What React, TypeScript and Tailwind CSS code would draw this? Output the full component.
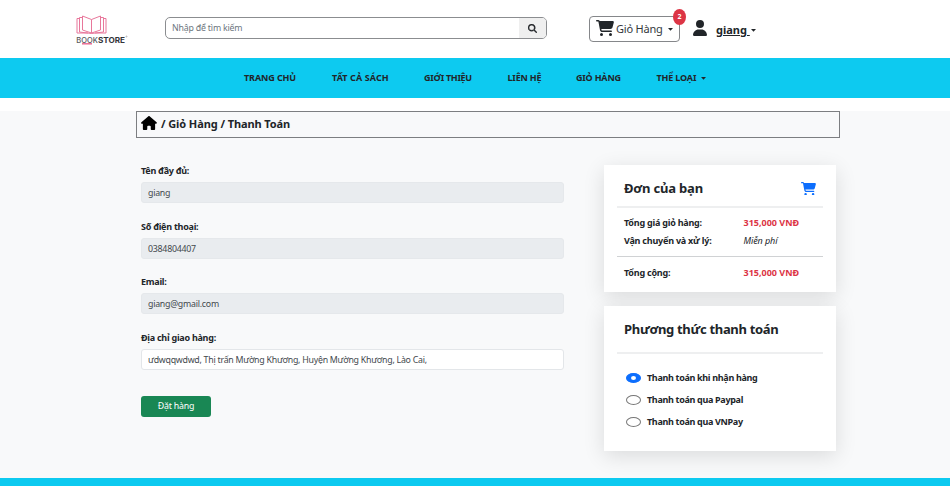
import type { ReactNode } from "react";
import { FaCartShopping, FaHouse, FaMagnifyingGlass, FaUser } from "react-icons/fa6";

const Caret = ({ className = "" }: { className?: string }) => (
  <svg viewBox="0 0 5 3" className={`h-[3px] w-[5px] shrink-0 ${className}`} fill="#212529">
    <path d="M0 0H5L2.500 2.700Z" />
  </svg>
);

const Logo = () => (
  <svg viewBox="0 0 52 32" className="h-8 w-[52px] shrink-0" fill="none" stroke="#e8779b" strokeWidth="1">
    <path d="M15.500 4.500 L6.500 1 V15 L15.500 18 L24.500 15 V1 Z V18" />
    <path d="M6 2.500 H3.500 V17 L15.500 18.500 L27.500 17 V2.500 H25 M3.500 3.500 H1 V18 H12 M27.500 3.500 H30 V18 H19" />
    <text x="0.300" y="27.600" stroke="none" fill="#55565b" fontSize="7.300" fontWeight="500" fontFamily="Inter, sans-serif" textLength="21.500" lengthAdjust="spacingAndGlyphs">BOOK</text>
    <text x="22" y="27.600" stroke="none" fill="#333439" fontSize="7.300" fontWeight="700" fontFamily="Inter, sans-serif" textLength="27" lengthAdjust="spacingAndGlyphs">STORE</text>
    <path d="M6 28.800 H16" strokeWidth="1.400" stroke="#e8638d" />
    <circle cx="50.500" cy="21.500" r=".6" strokeWidth=".4" stroke="#777" />
  </svg>
);

const Field = ({ label, value, editable = false }: { label: string; value: string; editable?: boolean }) => (
  <div className="h-[55.500px]">
    <div className="h-[18px] text-[9px] leading-[14px] font-bold tracking-[-0.26px]">{label}</div>
    <div className={`flex h-[21px] items-center rounded-[3px] border px-[6px] pt-[2px] text-[8.800px] tracking-[-0.250px] text-[#43484d] ${editable ? "border-[#e3e6e9] bg-white" : "border-[#e5e8eb] bg-[#e9ecef]"}`}>
      {value}
    </div>
  </div>
);

const Row = ({ label, children }: { label: string; children: ReactNode }) => (
  <div className="flex h-[18px] items-center pl-[7px]">
    <span className="w-[119.500px] text-[9px] font-bold tracking-[-0.220px]">{label}</span>
    {children}
  </div>
);

const Radio = ({ label, checked = false }: { label: string; checked?: boolean }) => (
  <label className="flex h-[22.300px] items-center pl-[9px]">
    <span className={`flex h-[10px] w-[15px] items-center justify-center rounded-[50%] border ${checked ? "border-[#0d6efd] bg-[#0d6efd]" : "border-[#777] bg-white"}`}>
      {checked && <span className="h-[4px] w-[5px] rounded-[50%] bg-white" />}
    </span>
    <span className="ml-[6px] text-[9px] font-bold tracking-[-0.320px]">{label}</span>
  </label>
);

export default function App() {
  return (
    <div className="flex h-[486px] w-[950px] flex-col overflow-hidden bg-white font-['Noto_Sans','Open_Sans',sans-serif] text-[#212529]">
      <header className="flex h-[58px] shrink-0 pl-[76px]">
        <div className="pt-[15px]"><Logo /></div>
        <div className="mt-[17px] ml-[37px] flex h-[22px] w-[382px] overflow-hidden rounded-[5px] border border-[#8b8d90] bg-white">
          <span className="flex flex-1 items-center pt-[2px] pl-[6px] text-[8.800px] tracking-[-0.200px] text-[#6c757d]">Nhập để tìm kiếm</span>
          <span className="flex w-[27px] items-center justify-center bg-[#efefef]"><FaMagnifyingGlass size={9} stroke="currentColor" strokeWidth={20} /></span>
        </div>
        <div className="relative mt-4 ml-[42px] flex h-[26px] w-[91px] items-center rounded-[4px] border border-[#85878a] pl-[6px]">
          <FaCartShopping className="-mt-[3px] h-4 w-[18px] shrink-0" />
          <span className="ml-[2px] pt-px text-[11px] tracking-[-0.200px] whitespace-nowrap text-[#34383c]">Giỏ Hàng</span>
          <Caret className="ml-[5px]" />
          <span className="absolute -top-2 -right-[7px] flex h-4 w-[13px] items-center justify-center rounded-[50%] bg-[#dc3545] text-[7px] font-bold text-white">2</span>
        </div>
        <FaUser className="mt-[20px] ml-[13px] h-4 w-[14px]" />
        <span className="mt-[22px] ml-[9px] text-[11px] leading-4 font-bold whitespace-pre underline">giang </span>
        <Caret className="mt-[29px] ml-[1px] self-start" />
      </header>
      <nav className="flex h-[40px] shrink-0 items-center bg-[#0dcaf0] pl-[244px] text-[9px] font-bold whitespace-nowrap">
        <span className="w-[88px] tracking-[-0.100px]">TRANG CHỦ</span>
        <span className="w-[92px] tracking-[0.100px]">TẤT CẢ SÁCH</span>
        <span className="w-[83.500px] tracking-[-0.300px]">GIỚI THIỆU</span>
        <span className="w-[68.500px] tracking-[-0.200px]">LIÊN HỆ</span>
        <span className="w-[80.500px] tracking-[-0.200px]">GIỎ HÀNG</span>
        <span className="w-[44px] tracking-[-0.150px]">THỂ LOẠI</span>
        <Caret />
      </nav>
      <main className="mt-[13px] h-[367px] shrink-0 bg-[#f8f9fa] pl-[136px]">
        <div className="flex h-[27px] w-[704px] items-center border border-[#7c7e81] pl-[4px] text-[11px] font-bold tracking-[-0.090px]">
          <FaHouse className="-mt-[4px] h-[14px] w-[16px] text-black" />
          <span className="ml-[4px]">/ Giỏ Hàng / Thanh Toán</span>
        </div>
        <div className="flex pl-[5px]">
          <form className="w-[423px] pt-[26.400px]">
            <Field label="Tên đầy đủ:" value="giang" />
            <Field label="Số điện thoại:" value="0384804407" />
            <Field label="Email:" value="giang@gmail.com" />
            <Field label="Địa chỉ giao hàng:" value="ưdwqqwdwd, Thị trấn Mường Khương, Huyện Mường Khương, Lào Cai," editable />
            <button type="button" className="mt-[9.600px] flex h-[21px] w-[70px] items-center justify-center rounded-[3px] bg-[#198754] pt-px text-[8.800px] tracking-[-0.200px] text-white">Đặt hàng</button>
          </form>
          <aside className="ml-[40px] w-[232px] pt-[27px]">
            <section className="h-[127px] bg-white px-[13px] shadow-[0_5px_20px_rgba(0,0,0,0.12)]">
              <div className="flex h-[43px] items-center justify-between border-b-2 border-[#eeeff0] px-[7px] pt-[6px]">
                <h2 className="text-[13px] font-bold tracking-[-0.180px]">Đơn của bạn</h2>
                <FaCartShopping className="h-[13.500px] w-[15px] text-[#0d6efd]" />
              </div>
              <div className="h-[49px] border-b border-[#d0d2d4] pt-[6px]">
                <Row label="Tổng giá giỏ hàng:"><span className="text-[9px] font-bold text-[#dc3545]">315,000 VNĐ</span></Row>
                <Row label="Vận chuyển và xử lý:"><span className="text-[9px] tracking-[-0.100px] italic">Miễn phí</span></Row>
              </div>
              <div className="pt-[7px]">
                <Row label="Tổng cộng:"><span className="text-[9px] font-bold text-[#dc3545]">315,000 VNĐ</span></Row>
              </div>
            </section>
            <section className="mt-[14px] h-[145px] bg-white px-[13px] shadow-[0_5px_20px_rgba(0,0,0,0.12)]">
              <div className="flex h-[48px] items-center border-b-2 border-[#eeeff0] px-[7px] pt-[2px]">
                <h2 className="text-[13px] font-bold tracking-[-0.320px]">Phương thức thanh toán</h2>
              </div>
              <div className="pt-[12.400px]">
                <Radio label="Thanh toán khi nhận hàng" checked />
                <Radio label="Thanh toán qua Paypal" />
                <Radio label="Thanh toán qua VNPay" />
              </div>
            </section>
          </aside>
        </div>
      </main>
      <footer className="h-2 shrink-0 bg-[#0dcaf0]" />
    </div>
  );
}
